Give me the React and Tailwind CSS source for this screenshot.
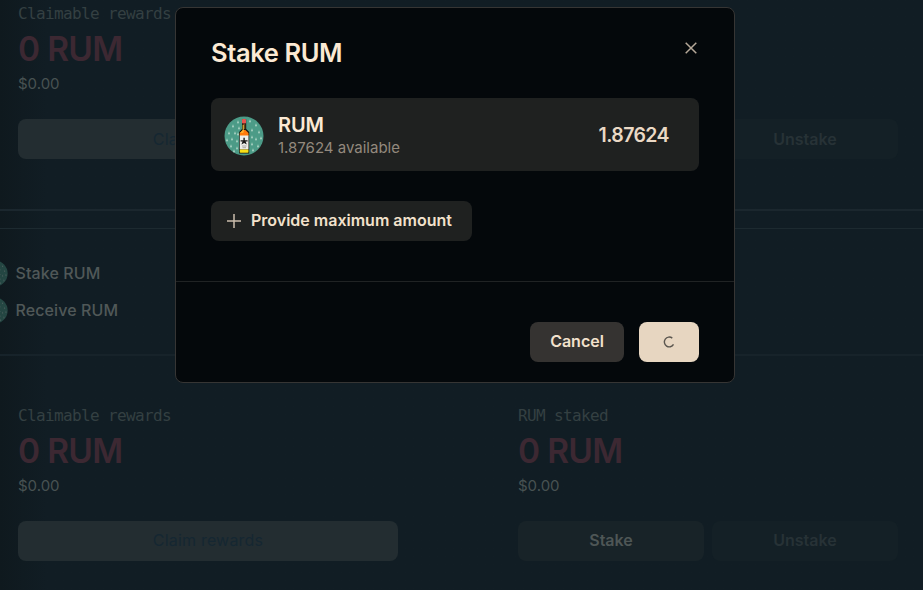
import React from "react";

const drops = [
  [9, 10], [14, 6], [26, 5], [32, 9], [5, 17], [11, 17], [28, 14], [35, 16],
  [3, 24], [8, 23], [13, 25], [28, 21], [32, 23], [37, 22], [7, 30], [13, 32],
  [28, 28], [34, 30], [29, 34], [10, 35], [15, 12], [14, 18],
];

function RumLogo({ className }) {
  return (
    <svg viewBox="0 0 40 40" className={className}>
      <circle cx="20" cy="20" r="19.5" fill="#4c9b87" />
      {drops.map(([x, y]) => (
        <path key={`${x}-${y}`} d={`M${x} ${y - 1.7}l.9 3h-1.8z`} fill="#c5e3d5" />
      ))}
      <path d="M18 3.5h4.2v9.5l3 3v21.5h-10V16l2.8-3z" fill="#17150f" />
      <rect x="18" y="3" width="4" height="4.6" rx="0.8" fill="#e9534e" />
      <path d="M18.7 8h2.6v5h-2.6z" fill="#6b4a1e" />
      <path d="M18.7 9h1v5h-1z" fill="#f5c33b" />
      <path d="M15.8 17l3-3h2.6l3.1 3v3h-8.7z" fill="#ff7a0a" />
      <path d="M15.8 17l3-3h1.4l-1 3z" fill="#ffb02c" />
      <rect x="15.8" y="19.5" width="8.7" height="14" fill="#eeeeea" />
      <path d="M19.4 21.8h1.4v2.4h2.8v1.4h-2l1.2 3-2.7-1.6-2.7 1.6 1.2-3h-2v-1.4h2.8z" fill="#191919" />
      <path d="M18 30h4.5M18.5 31.7h3.5" stroke="#8b8b86" strokeWidth="0.7" />
      <rect x="15.8" y="33.5" width="8.7" height="3.2" rx="0.6" fill="#f7df16" />
    </svg>
  );
}

function Stat({ label, children }) {
  return (
    <div>
      <p className="h-5 pt-px font-['DejaVu_Sans_Mono',monospace] text-base leading-5 tracking-[-0.63px] text-[#344042]">
        {label}
      </p>
      <p className="mt-2 h-9 text-[33.5px] font-semibold leading-9 tracking-[-0.7px] text-[#3c2832]">0 RUM</p>
      <p className="mt-[7px] h-5 text-[15px] leading-5 text-[#485252]">$0.00</p>
      <div className="mt-[25px] flex gap-2">{children}</div>
    </div>
  );
}

function PoolStats() {
  return (
    <div className="grid grid-cols-[380px_380px] gap-[120px] pl-[18px]">
      <Stat label="Claimable rewards">
        <button className="h-10 flex-1 rounded-lg bg-[#232d31] pb-[1.2px] text-base tracking-[0.2px] text-[#152732]">
          Claim rewards
        </button>
      </Stat>
      <Stat label="RUM staked">
        <button className="h-10 flex-1 rounded-lg bg-[#182328] pb-[1.2px] text-base font-semibold text-[#4e5656]">
          Stake
        </button>
        <button className="h-10 flex-1 rounded-lg bg-[#142026] pb-[1.2px] text-base font-semibold text-[#273236]">
          Unstake
        </button>
      </Stat>
    </div>
  );
}

function TokenRow({ text }) {
  return (
    <div className="-ml-[19.5px] flex h-[26px] items-center gap-2">
      <RumLogo className="size-[27px] opacity-35" />
      <span className="text-base font-medium tracking-[0.1px] text-[#505858]">{text}</span>
    </div>
  );
}

function StakeModal() {
  return (
    <div className="absolute left-[175px] top-[7px] h-[376px] w-[560px] rounded-lg border border-[#363534] bg-[#04080b] text-[#fbe9d3]">
      <div className="flex h-[274px] flex-col items-start border-b border-[#202324] px-[35px] pt-[29px]">
        <div className="flex h-8 w-full items-center justify-between">
          <h2 className="text-[25.5px] font-semibold leading-8 tracking-[-0.4px]">Stake RUM</h2>
          <button aria-label="Close" className="mb-[11px] mr-0.5">
            <svg viewBox="0 0 12 12" className="size-3" fill="none" stroke="#b5a899" strokeWidth="1.5">
              <path d="M.7.7l10.6 10.6M11.3.7L.7 11.3" />
            </svg>
          </button>
        </div>

        <div className="mt-[29px] flex h-[73px] w-full items-center rounded-lg bg-[#1f2120] pl-[13px] pr-[30px]">
          <RumLogo className="mt-0.5 size-10" />
          <div className="ml-[14px] mt-0.5 flex-1">
            <p className="text-xl font-semibold leading-6 tracking-[-0.1px]">RUM</p>
            <p className="text-[15px] leading-[22px] text-[#93897d]">1.87624 available</p>
          </div>
          <p className="mt-[3px] text-[19.5px] font-semibold tracking-[-0.6px] text-[#ead9c5]">1.87624</p>
        </div>

        <button className="mt-[30px] flex h-10 items-center rounded-lg bg-[#1f2120] pl-4 pr-5 text-base font-semibold text-[#f2e1cc]">
          <svg viewBox="0 0 14 14" className="mr-2.5 size-3.5" stroke="#cbbdac" strokeWidth="1.5">
            <path d="M7 0v14M0 7h14" />
          </svg>
          <span className="pb-0.5">Provide maximum amount</span>
        </button>
      </div>

      <div className="flex justify-end gap-[15px] px-[35px] pt-10">
        <button className="h-10 w-[94px] rounded-lg bg-[#353331] pb-0.5 text-base font-semibold text-[#f2e1cc]">
          Cancel
        </button>
        <button aria-label="Stake" className="flex h-10 w-[60px] items-center justify-center rounded-lg bg-[#e7d6c1]">
          <svg viewBox="0 0 12 12" className="size-3" fill="none" stroke="#5b564f" strokeWidth="1.4">
            <path d="M9.3 2.1A4.9 4.9 0 1 0 10.5 8.4" />
          </svg>
        </button>
      </div>
    </div>
  );
}

function App() {
  return (
    <div className="relative h-[590px] w-[923px] overflow-hidden bg-[#111d24] bg-linear-to-r from-[#0f191e] to-[#111d24] to-5% font-['Inter',sans-serif]">
      <section className="h-[211px] border-b-2 border-[#1b272e] pt-[3.4px]">
        <PoolStats />
      </section>

      <section className="mt-[17px] border-t border-[#1d2a30]">
        <div className="flex h-[127px] flex-col gap-[11px] border-b-2 border-[#17232a] pt-[31px]">
          <TokenRow text="Stake RUM" />
          <TokenRow text="Receive RUM" />
        </div>
        <div className="pt-[48.6px]">
          <PoolStats />
        </div>
      </section>

      <StakeModal />
    </div>
  );
}

export default App;
